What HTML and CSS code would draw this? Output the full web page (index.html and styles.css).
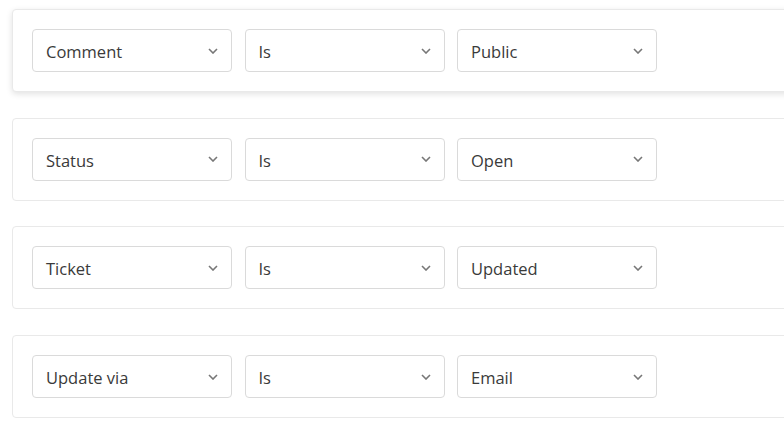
FILE: index.html
```html
<!DOCTYPE html>
<html lang="en">
<head>
<meta charset="utf-8">
<title>Conditions</title>
<link rel="stylesheet" href="styles.css">
</head>
<body>
<div class="list">
  <div class="card card-active">
    <div class="select"><span>Comment</span><svg class="chev" viewBox="0 0 10 6"><path d="M1 1l4 4 4-4"/></svg></div>
    <div class="select"><span>Is</span><svg class="chev" viewBox="0 0 10 6"><path d="M1 1l4 4 4-4"/></svg></div>
    <div class="select"><span>Public</span><svg class="chev" viewBox="0 0 10 6"><path d="M1 1l4 4 4-4"/></svg></div>
  </div>
  <div class="card">
    <div class="select"><span>Status</span><svg class="chev" viewBox="0 0 10 6"><path d="M1 1l4 4 4-4"/></svg></div>
    <div class="select"><span>Is</span><svg class="chev" viewBox="0 0 10 6"><path d="M1 1l4 4 4-4"/></svg></div>
    <div class="select"><span>Open</span><svg class="chev" viewBox="0 0 10 6"><path d="M1 1l4 4 4-4"/></svg></div>
  </div>
  <div class="card">
    <div class="select"><span>Ticket</span><svg class="chev" viewBox="0 0 10 6"><path d="M1 1l4 4 4-4"/></svg></div>
    <div class="select"><span>Is</span><svg class="chev" viewBox="0 0 10 6"><path d="M1 1l4 4 4-4"/></svg></div>
    <div class="select"><span>Updated</span><svg class="chev" viewBox="0 0 10 6"><path d="M1 1l4 4 4-4"/></svg></div>
  </div>
  <div class="card">
    <div class="select"><span>Update via</span><svg class="chev" viewBox="0 0 10 6"><path d="M1 1l4 4 4-4"/></svg></div>
    <div class="select"><span>Is</span><svg class="chev" viewBox="0 0 10 6"><path d="M1 1l4 4 4-4"/></svg></div>
    <div class="select"><span>Email</span><svg class="chev" viewBox="0 0 10 6"><path d="M1 1l4 4 4-4"/></svg></div>
  </div>
</div>
</body>
</html>
```
FILE: styles.css
```css
html, body {
  margin: 0;
  padding: 0;
  background: #fff;
  overflow: hidden;
}
body {
  font-family: "Open Sans", "Noto Sans", sans-serif;
  color: #333;
}
.list {
  display: flex;
  flex-direction: column;
  gap: 25.7px;
  padding: 9px 0 0 12px;
  margin-right: -40px;
}
.card {
  display: flex;
  gap: 12.5px;
  height: 83px;
  box-sizing: border-box;
  padding: 19px 19px;
  border: 1px solid #e9e9e9;
  border-radius: 4px;
  background: #fff;
}
.card-active {
  box-shadow: 0 2px 6px rgba(0, 0, 0, 0.12);
}
.select {
  width: 200px;
  height: 43px;
  box-sizing: border-box;
  border: 1px solid #dadada;
  border-radius: 4px;
  display: flex;
  align-items: center;
  justify-content: space-between;
  padding: 2px 13px 0 13px;
  font-size: 16.5px;
  color: #3a3a3a;
}
.chev {
  width: 10px;
  height: 6px;
  margin-bottom: 2px;
  fill: none;
  stroke: #777;
  stroke-width: 1.6;
}
```
